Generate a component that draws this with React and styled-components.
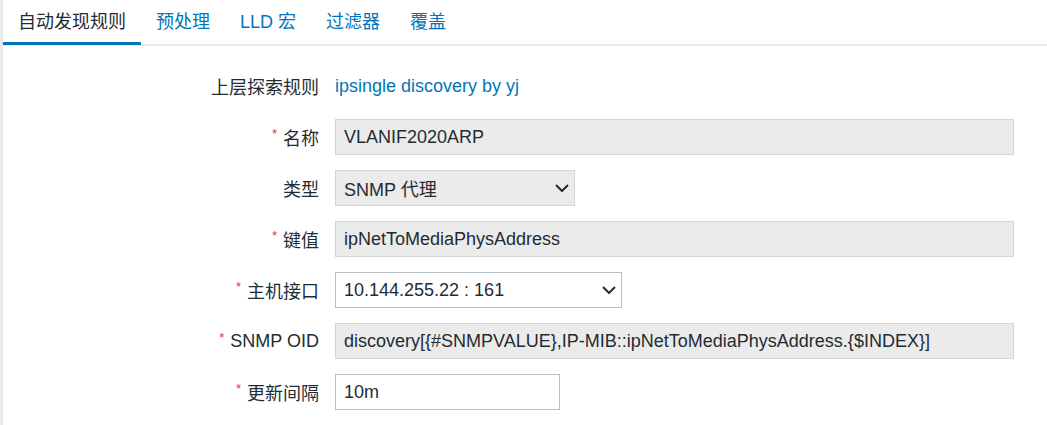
import React from 'react'
import styled, { createGlobalStyle } from 'styled-components'

const GlobalStyle = createGlobalStyle`
  body {
    margin: 0;
    background: #ffffff;
    font-family: "Liberation Sans", Arial, "Noto Sans CJK SC", sans-serif;
    color: #1f2c33;
  }
`

const tabs = ['自动发现规则', '预处理', 'LLD 宏', '过滤器', '覆盖']

const fields = [
  { label: '名称', required: true, kind: 'input', value: 'VLANIF2020ARP', readonly: true },
  { label: '类型', kind: 'select', value: 'SNMP 代理', width: 240 },
  { label: '键值', required: true, kind: 'input', value: 'ipNetToMediaPhysAddress', readonly: true },
  { label: '主机接口', required: true, kind: 'select', value: '10.144.255.22 : 161', width: 287 },
  {
    label: 'SNMP OID',
    required: true,
    kind: 'input',
    value: 'discovery[{#SNMPVALUE},IP-MIB::ipNetToMediaPhysAddress.{$INDEX}]',
    readonly: true,
  },
  { label: '更新间隔', required: true, kind: 'input', value: '10m', width: 225 },
]

function Chevron() {
  return (
    <svg width="14" height="8" viewBox="0 0 14 8" fill="none">
      <path d="M1 1l6 6 6-6" stroke="#1f2c33" strokeWidth="2" strokeLinejoin="miter" />
    </svg>
  )
}

function App() {
  return (
    <>
      <GlobalStyle />
      <Page>
        <Main>
          <TabBar>
            {tabs.map((t, i) => (
              <Tab key={t} $active={i === 0}>{t}</Tab>
            ))}
          </TabBar>
          <Form>
            <Label>上层探索规则</Label>
            <Value>
              <Link href="#">ipsingle discovery by yj</Link>
            </Value>
            {fields.map((f) => (
              <React.Fragment key={f.label}>
                <Label>
                  {f.required && <Star>*</Star>}
                  {f.label}
                </Label>
                <Value>
                  {f.kind === 'select' ? (
                    <SelectBox $width={f.width}>
                      <span>{f.value}</span>
                      <Chevron />
                    </SelectBox>
                  ) : (
                    <TextInput
                      readOnly
                      defaultValue={f.value}
                      $readonly={f.readonly}
                      $width={f.width}
                    />
                  )}
                </Value>
              </React.Fragment>
            ))}
          </Form>
        </Main>
      </Page>
    </>
  )
}

const Page = styled.div`
  display: flex;
  min-height: 425px;
  border-left: 3px solid #e8ebee;
`

const Main = styled.div`
  flex: 1;
`

const TabBar = styled.div`
  display: flex;
  height: 44px;
  border-bottom: 2px solid #ebebeb;
`

const Tab = styled.div`
  display: flex;
  align-items: center;
  padding: 0 15px 3px;
  font-size: 18px;
  color: ${(p) => (p.$active ? '#1f2c33' : '#0275b8')};
  border-bottom: 3px solid ${(p) => (p.$active ? '#0275b8' : 'transparent')};
  margin-bottom: -1px;
`

const Form = styled.div`
  display: grid;
  grid-template-columns: 316px 679px;
  column-gap: 16px;
  row-gap: 15px;
  padding-top: 22px;
`

const Label = styled.div`
  display: flex;
  align-items: center;
  justify-content: flex-end;
  height: 36px;
  font-size: 18px;
  color: #1f2c33;
`

const Star = styled.span`
  color: #e0383e;
  font-size: 13px;
  margin-right: 6px;
  position: relative;
  top: -4px;
`

const Value = styled.div`
  display: flex;
  align-items: center;
  height: 36px;
`

const Link = styled.a`
  color: #0275b8;
  font-size: 18px;
  text-decoration: none;
`

const TextInput = styled.input`
  box-sizing: border-box;
  width: ${(p) => (p.$width ? `${p.$width}px` : '100%')};
  height: 36px;
  padding: 0 8px;
  font-family: inherit;
  font-size: 18px;
  color: #1f2c33;
  background: ${(p) => (p.$readonly ? '#ebebeb' : '#ffffff')};
  border: 1px solid ${(p) => (p.$readonly ? '#cfd5d9' : '#b8c0c6')};
  border-radius: 0;
  outline: none;
`

const SelectBox = styled.div`
  box-sizing: border-box;
  display: flex;
  align-items: center;
  justify-content: space-between;
  width: ${(p) => p.$width}px;
  height: 36px;
  padding: 0 5px 0 8px;
  font-size: 18px;
  color: #1f2c33;
  background: ${(p) => (p.$width < 260 ? '#ebebeb' : '#ffffff')};
  border: 1px solid ${(p) => (p.$width < 260 ? '#cfd5d9' : '#b8c0c6')};
`

export default App
